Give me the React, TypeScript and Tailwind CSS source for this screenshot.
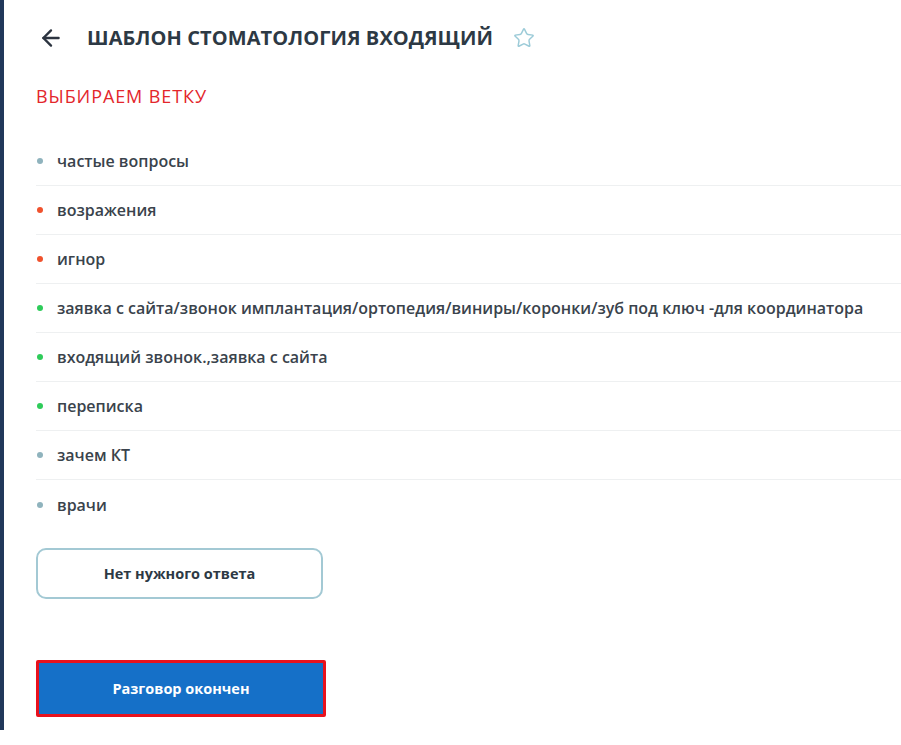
import { ArrowLeft, Star } from 'lucide-react';

const items = [
  { text: 'частые вопросы', color: 'bg-[#8fb3bd]' },
  { text: 'возражения', color: 'bg-[#f0522d]' },
  { text: 'игнор', color: 'bg-[#f0522d]' },
  { text: 'заявка с сайта/звонок имплантация/ортопедия/виниры/коронки/зуб под ключ -для координатора', color: 'bg-[#2ecc5a]' },
  { text: 'входящий звонок.,заявка с сайта', color: 'bg-[#2ecc5a]' },
  { text: 'переписка', color: 'bg-[#2ecc5a]' },
  { text: 'зачем КТ', color: 'bg-[#8fb3bd]' },
  { text: 'врачи', color: 'bg-[#8fb3bd]' },
];

const App = () => {
  return (
    <div className="w-[901px] h-[745px] bg-white flex font-['Open_Sans',sans-serif] overflow-hidden">
      <div className="w-[4px] h-[730px] bg-[#21385a] shrink-0" />
      <div className="flex-1 pl-[32px] flex flex-col">
        <div className="flex items-center h-[36px] mt-[20px]">
          <ArrowLeft className="w-[26px] h-[26px] text-[#2c3440] ml-[2px]" strokeWidth={2.2} />
          <h1 className="ml-[23px] text-[20px] font-bold text-[#2d3944] tracking-[0.1px]">ШАБЛОН СТОМАТОЛОГИЯ ВХОДЯЩИЙ</h1>
          <Star className="ml-[20px] w-[22px] h-[22px] text-[#9ccbd8]" strokeWidth={1.6} />
        </div>
        <div className="mt-[28px] text-[18px] text-[#e3262b] leading-[24px] tracking-[0.9px]">ВЫБИРАЕМ ВЕТКУ</div>
        <ul className="mt-[29px]">
          {items.map((item, i) => (
            <li
              key={i}
              className={`flex items-center h-[49px] ${i < items.length - 1 ? 'border-b border-[#eef0f1]' : ''}`}
            >
              <span className={`w-[6px] h-[6px] rounded-full ${item.color} ml-[1px]`} />
              <span className="ml-[14px] text-[16px] font-semibold text-[#3a434c] whitespace-nowrap">{item.text}</span>
            </li>
          ))}
        </ul>
        <button className="mt-[19px] w-[287px] h-[51px] rounded-[10px] border-2 border-[#a3c9d4] bg-white text-[14.5px] font-bold text-[#2d3944]">
          Нет нужного ответа
        </button>
        <div className="mt-[61px] w-[290px] h-[57px] border-[3px] border-[#e8121d] rounded-[2px] bg-[#1570c8] flex items-center justify-center">
          <span className="text-[14.5px] font-bold text-white">Разговор окончен</span>
        </div>
      </div>
    </div>
  );
};

export default App;
